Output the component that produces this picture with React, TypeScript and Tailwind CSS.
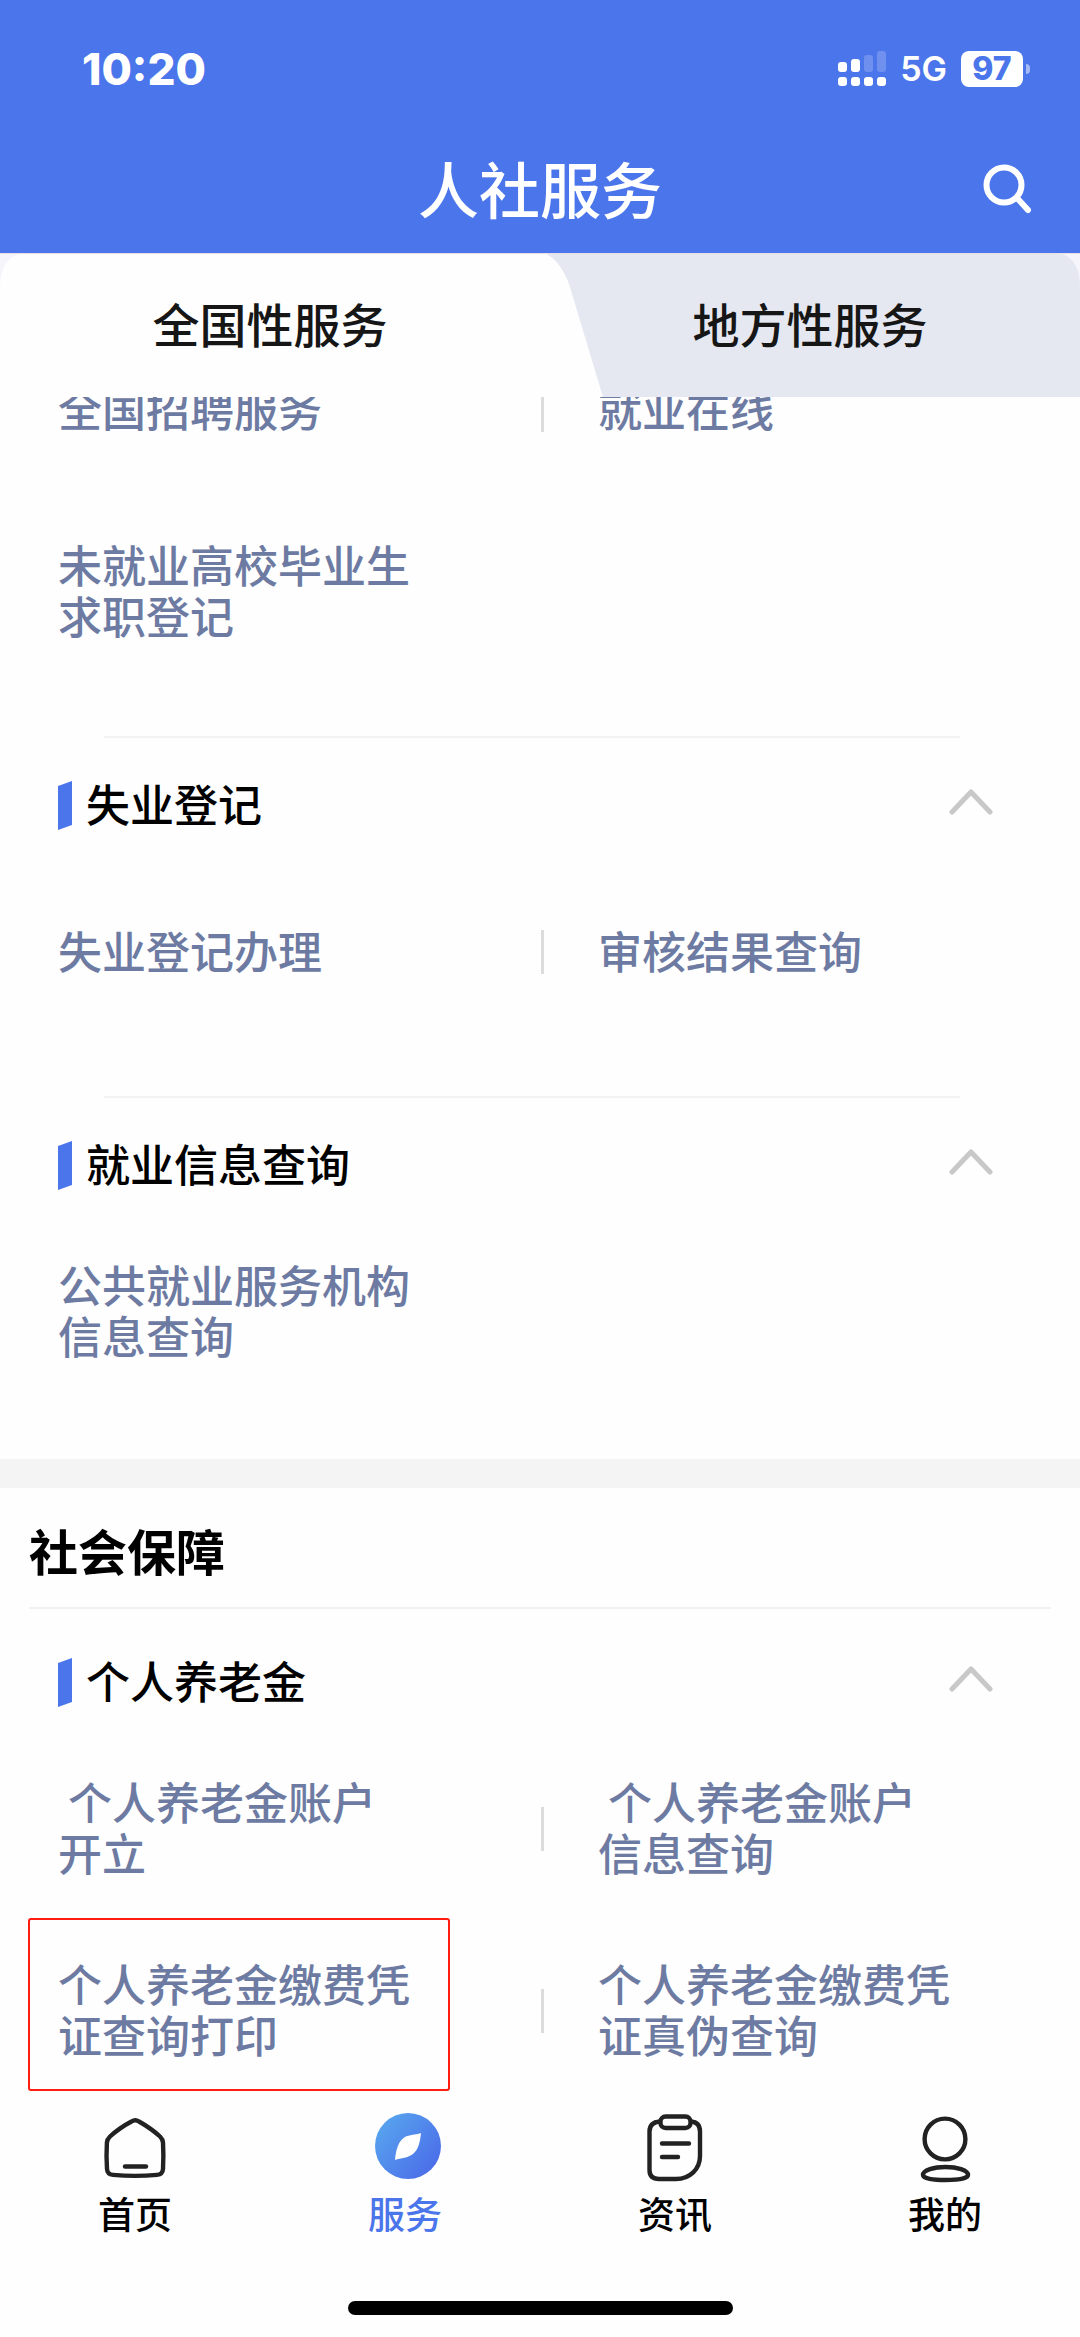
import React, { useState } from "react";

const StatusBar = () => {
  return (
    <div className="flex h-[137px] items-center justify-between pl-[82px] pr-[50px] font-['Inter',sans-serif]">
      <span className="text-[44px] font-extrabold leading-none">10:20</span>
      <div className="flex items-center">
        <svg width="48" height="36" viewBox="0 0 48 36" fill="#fff" aria-hidden="true">
          <rect x="0" y="11" width="9" height="10" rx="3" />
          <rect x="13" y="8" width="9" height="13" rx="3" />
          <rect x="26" y="4" width="9" height="17" rx="3" opacity="0.2" />
          <rect x="39" y="0" width="9" height="21" rx="3" opacity="0.2" />
          <rect x="0" y="26" width="9" height="9" rx="3" />
          <rect x="13" y="26" width="9" height="9" rx="3" />
          <rect x="26" y="26" width="9" height="9" rx="3" />
          <rect x="39" y="26" width="9" height="9" rx="3" />
        </svg>
        <span className="ml-[14px] text-[34px] font-semibold leading-none">5G</span>
        <span className="ml-[14px] flex h-9 w-[62px] items-center justify-center rounded-lg bg-white text-[32px] font-extrabold leading-none text-[#4b75ea]">
          97
        </span>
        <span className="ml-[3px] h-[10px] w-1 rounded-r-full bg-white/50" />
      </div>
    </div>
  );
};

const Header = () => {
  return (
    <header className="bg-[#4b75ea] text-white">
      <StatusBar />
      <div className="grid h-[116px] grid-cols-[1fr_auto_1fr] items-start">
        <span />
        <h1 className="text-[61px] font-medium leading-[101px]">人社服务</h1>
        <button type="button" aria-label="搜索" className="mr-12 mt-6 justify-self-end">
          <svg width="52" height="54" viewBox="0 0 52 54" fill="none" stroke="#fff" strokeWidth="6" strokeLinecap="round">
            <circle cx="24" cy="24" r="17.5" />
            <path d="M37 37 L48 49" />
          </svg>
        </button>
      </div>
    </header>
  );
};

const Tabs = () => {
  return (
    <div role="tablist" className="relative grid h-36 shrink-0 grid-cols-2 bg-[#f6f5fc]">
      {/* slanted edge between the active and the idle tab */}
      <svg className="absolute inset-0 h-full w-full" viewBox="0 0 1080 144" preserveAspectRatio="none" aria-hidden="true">
        <path d="M0 144 V36 Q0 0 28 0 H545 Q562 9 570 34 L603 144Z" fill="#fefefe" />
        <path d="M545 0 H1058 Q1080 4 1080 34 V144 H603 L570 34 Q562 9 545 0Z" fill="#e5e8f1" />
        <rect width="1080" height="1" fill="#e8dfe6" />
      </svg>
      {["全国性服务", "地方性服务"].map((label, index) => (
        <button
          key={label}
          type="button"
          role="tab"
          aria-selected={index === 0}
          className="relative pb-1 text-[47px] font-medium text-[#161616]"
        >
          {label}
        </button>
      ))}
    </div>
  );
};

type Item = { name: string; marked?: boolean };

const ServiceGrid = ({ items }: { items: Item[] }) => {
  return (
    <ul className="grid grid-cols-2">
      {items.map((item, index) => (
        <li key={item.name} className="relative flex h-[182px] items-center">
          {index % 2 === 1 && <span className="absolute left-px h-11 w-[3px] bg-[#dcdcdc]" />}
          <a
            href="#"
            className="ml-[58px] max-w-[360px] whitespace-pre-wrap pb-1 text-[44px] font-medium leading-[51px] text-[#6d7ba3]"
          >
            {item.name}
          </a>
          {item.marked && (
            <span className="pointer-events-none absolute -top-[2px] bottom-[11px] left-7 right-[90px] rounded-[3px] border-2 border-[#ff1d12]" />
          )}
        </li>
      ))}
    </ul>
  );
};

const Section = ({ title, items }: { title: string; items: Item[] }) => {
  const [open, setOpen] = useState(true);

  return (
    <section>
      <div className="flex h-[123px] items-center pl-[58px] pr-[86px] pt-3">
        <svg width="14" height="49" viewBox="0 0 14 49" aria-hidden="true">
          <path d="M0 5 L14 0 V44 L0 49Z" fill="#4b75ea" />
        </svg>
        <h3 className="ml-[14px] pb-1 text-[44px] font-medium leading-[51px] text-black">{title}</h3>
        <button
          type="button"
          aria-label={title}
          aria-expanded={open}
          onClick={() => setOpen(!open)}
          className="mb-2 ml-auto"
        >
          <svg
            className={open ? "" : "rotate-180"}
            width="46"
            height="26"
            viewBox="0 0 46 26"
            fill="none"
            stroke="#c8c8c8"
            strokeWidth="5"
            strokeLinecap="round"
            strokeLinejoin="round"
          >
            <path d="M4 23 L23 3 L42 23" />
          </svg>
        </button>
      </div>
      {open && <ServiceGrid items={items} />}
    </section>
  );
};

const Separator = () => <hr className="ml-[104px] mr-[120px] mt-[53px] border-t-2 border-[#f3f3f3]" />;

const HomeIcon = () => (
  <svg width="66" height="70" viewBox="0 0 66 70" fill="none" stroke="#222" strokeWidth="4.4" strokeLinecap="round">
    <path d="M29.5 8.5 C32 6.8 34.5 6.8 37 8.5 C44 12.5 52 18 58 23.5 C60 25.5 60.8 27 61 29.5 C61.5 38 61.5 47 61 56 C60.8 60 59 61.5 55 61.9 C41 63.2 25 63.2 11 61.9 C7 61.5 5.2 60 5 56 C4.4 47 4.4 38 4.9 29.5 C5 27 6 25.5 8 23.5 C14 18 22 12.5 29.5 8.5Z" />
    <path d="M23 53.5 H44" />
  </svg>
);

const ServiceIcon = () => (
  <svg width="66" height="70" viewBox="0 0 66 70" className="overflow-visible">
    <defs>
      <linearGradient id="serviceFill" x1="0" y1="0.1" x2="1" y2="0.9">
        <stop offset="0" stopColor="#58a8ef" />
        <stop offset="1" stopColor="#4a68e8" />
      </linearGradient>
    </defs>
    <circle cx="36" cy="33" r="33" fill="url(#serviceFill)" />
    <path d="M49 20 C48 30 46 37 41 41 C36 45 29 45 23 47 C24 36 26.5 29 31.5 25 C36 21.5 43 22 49 20Z" fill="#fff" />
  </svg>
);

const NewsIcon = () => (
  <svg width="66" height="70" viewBox="0 0 66 70" fill="none" stroke="#222" strokeWidth="4.4" strokeLinecap="round">
    <rect x="18.5" y="3.5" width="30" height="11.5" rx="5" />
    <path d="M18 8.5 C11 9 7.5 12.5 7.5 18.5 V57 C7.5 63 11 66 17 66 H34 C48 66 58 56 58 43 V18.5 C58 12.5 55 9 49 8.5" />
    <path d="M20 30.5 H47 M20 44 H36" />
  </svg>
);

const MineIcon = () => (
  <svg width="66" height="70" viewBox="0 0 66 70" fill="none" stroke="#222" strokeWidth="4.4">
    <circle cx="33" cy="26" r="20.4" />
    <path d="M11 62 C11 57 22 54 33.5 54 S56 57 56 62 C56 65.5 46 67 33.5 67 S11 65.5 11 62Z" />
  </svg>
);

const NavBar = () => {
  return (
    <footer className="bg-[#fefefe] pt-[10px]">
      <nav className="grid grid-cols-4">
        {navItems.map(({ label, Icon, active }) => (
          <a
            key={label}
            href="#"
            aria-current={active ? "page" : undefined}
            className={`flex flex-col items-center text-[37px] font-medium leading-[60px] ${
              active ? "text-[#4b75ea]" : "text-black"
            }`}
          >
            <Icon />
            {label}
          </a>
        ))}
      </nav>
      <div className="mx-auto mb-[22px] mt-[58px] h-[14px] w-[385px] rounded-full bg-black" />
    </footer>
  );
};

const App = () => {
  return (
    <div className="flex min-h-screen flex-col bg-[#fefefe] font-['Noto_Sans_CJK_SC',sans-serif]">
      <Header />
      <Tabs />
      <main className="grow overflow-hidden">
        {/* list is scrolled a little way under the tabs */}
        <div className="-mt-[78px]">
          <ServiceGrid items={jobServices} />
          <Separator />
          <Section title="失业登记" items={unemployment} />
          <Separator />
          <Section title="就业信息查询" items={jobInfo} />
        </div>
        <div className="mt-14 h-[29px] bg-[#f4f4f4]" />
        <h2 className="mx-[29px] border-b-2 border-[#f1f1f1] pb-[2px] pt-[6px] text-[49px] font-bold leading-[111px] text-black">
          社会保障
        </h2>
        <div className="pt-[6px]">
          <Section title="个人养老金" items={pension} />
        </div>
      </main>
      <NavBar />
    </div>
  );
};

const jobServices: Item[] = [
  { name: "全国招聘服务" },
  { name: "就业在线" },
  { name: "未就业高校毕业生求职登记" },
];

const unemployment: Item[] = [{ name: "失业登记办理" }, { name: "审核结果查询" }];

const jobInfo: Item[] = [{ name: "公共就业服务机构信息查询" }];

const pension: Item[] = [
  { name: " 个人养老金账户开立" },
  { name: " 个人养老金账户信息查询" },
  { name: "个人养老金缴费凭证查询打印", marked: true },
  { name: "个人养老金缴费凭证真伪查询" },
];

const navItems = [
  { label: "首页", Icon: HomeIcon, active: false },
  { label: "服务", Icon: ServiceIcon, active: true },
  { label: "资讯", Icon: NewsIcon, active: false },
  { label: "我的", Icon: MineIcon, active: false },
];

export default App;
